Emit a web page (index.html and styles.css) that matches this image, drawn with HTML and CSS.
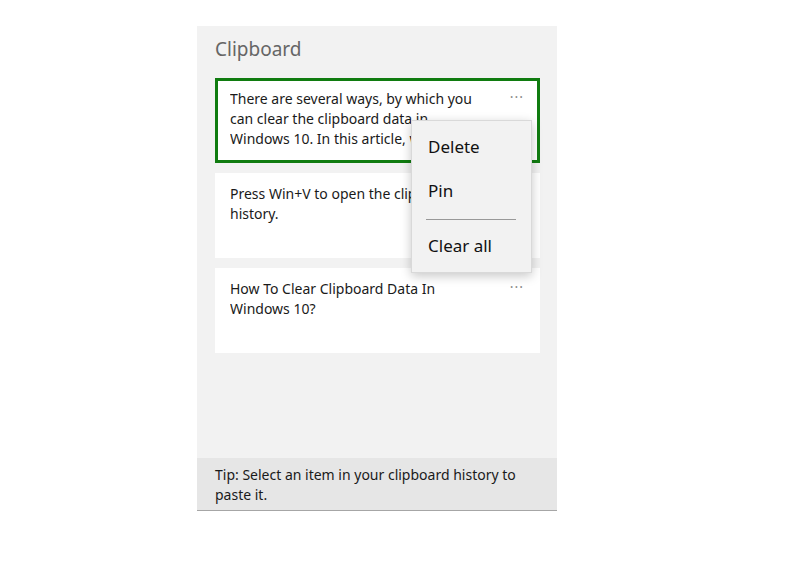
FILE: index.html
```html
<!DOCTYPE html>
<html lang="en">
<head>
<meta charset="utf-8">
<title>Clipboard</title>
<link rel="stylesheet" href="styles.css">
</head>
<body>
<div class="panel">
  <h1 class="title">Clipboard</h1>
  <div class="list">
    <div class="card selected">
      <p class="text">There are several ways, by which you can clear the clipboard data in Windows 10. In this article, we will review all of them.</p>
      <span class="more">···</span>
    </div>
    <div class="card">
      <p class="text">Press Win+V to open the clipboard history.</p>
      <span class="more">···</span>
    </div>
    <div class="card">
      <p class="text">How To Clear Clipboard Data In Windows 10?</p>
      <span class="more">···</span>
    </div>
  </div>
  <div class="tip">Tip: Select an item in your clipboard history to paste it.</div>
  <div class="menu">
    <div class="menu-item">Delete</div>
    <div class="menu-item">Pin</div>
    <div class="menu-sep"></div>
    <div class="menu-item">Clear all</div>
  </div>
</div>
</body>
</html>
```
FILE: styles.css
```css
html, body {
  margin: 0;
  background: #ffffff;
}
body {
  padding: 26px 0 0 197px;
  font-family: "Noto Sans", "Open Sans", sans-serif;
  color: #1a1a1a;
}
.panel {
  position: relative;
  width: 360px;
  height: 485px;
  background: #f2f2f2;
  display: flex;
  flex-direction: column;
}
.title {
  margin: 0;
  padding: 10px 18px 0;
  height: 52px;
  box-sizing: border-box;
  font-size: 19px;
  font-weight: normal;
  color: #666666;
  line-height: 26px;
}
.list {
  flex: 1;
  display: flex;
  flex-direction: column;
  gap: 10px;
  padding: 0 17px 0 18px;
}
.card {
  position: relative;
  height: 85px;
  box-sizing: border-box;
  background: #ffffff;
  padding: 11px 50px 0 15px;
  overflow: hidden;
}
.card.selected {
  border: 3px solid #107c10;
  padding: 8px 47px 0 12px;
}
.text {
  margin: 0;
  font-size: 14px;
  line-height: 20px;
  max-height: 60px;
  overflow: hidden;
}
.more {
  position: absolute;
  top: 9px;
  right: 16px;
  font-size: 14px;
  line-height: 20px;
  color: #8a8a8a;
  letter-spacing: 1px;
}
.card.selected .more {
  top: 6px;
  right: 13px;
}
.tip {
  height: 53px;
  box-sizing: border-box;
  background: #e6e6e6;
  border-bottom: 1px solid #a6a6a6;
  padding: 7px 18px 0;
  font-size: 14px;
  line-height: 20px;
}
.menu {
  position: absolute;
  left: 214px;
  top: 94px;
  width: 121px;
  height: 153px;
  box-sizing: border-box;
  padding: 5px 0;
  background: #f2f2f2;
  border: 1px solid #d9d9d9;
  box-shadow: 0 3px 10px rgba(0, 0, 0, 0.22);
}
.menu-item {
  height: 44px;
  line-height: 42px;
  padding-left: 16px;
  font-size: 17px;
  color: #111111;
}
.menu-sep {
  height: 1px;
  margin: 5px 15px 5px 14px;
  background: #999999;
}
```
